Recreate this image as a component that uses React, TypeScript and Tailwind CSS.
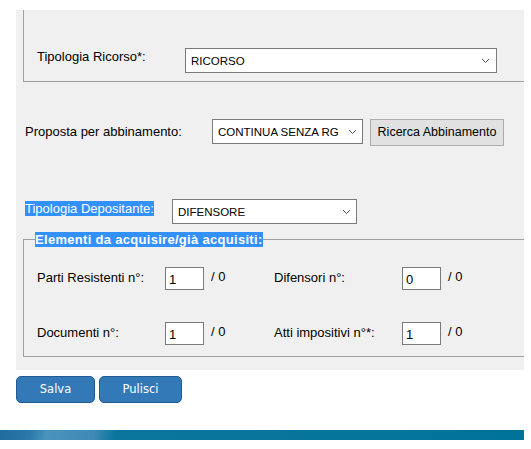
import type { ReactNode } from 'react';

// Small grey chevron used by the fake select boxes
function Chevron() {
  return (
    <svg width="9" height="6" viewBox="0 0 9 6" className="shrink-0">
      <path d="M1 1l3.5 3.5L8 1" fill="none" stroke="#555" strokeWidth="1" />
    </svg>
  );
}

function SelectBox({ value, className }: { value: string; className: string }) {
  return (
    <div
      className={`flex items-center justify-between bg-white border border-[#7a7a7a] pl-[5px] pr-[5px] text-[11.5px] text-black ${className}`}
    >
      <span className="leading-[15px] pt-[1px]">{value}</span>
      <Chevron />
    </div>
  );
}

function NumInput({ value }: { value: string }) {
  return (
    <div className="w-[39px] h-[23px] bg-white border border-[#7a7a7a] pl-[3px] pt-[4px] leading-[15px] text-[13px]">
      {value}
    </div>
  );
}

function Label({ children }: { children: ReactNode }) {
  return <span className="leading-[15px] text-[13px] text-black">{children}</span>;
}

export default function App() {
  return (
    <div className="w-[531px] h-[449px] bg-white overflow-hidden font-['Liberation_Sans',Arial,sans-serif] text-[13px] text-black">
      <div className="pt-[10px] pl-[16px]">
        <div className="w-[508px] h-[360px] bg-[#f0f0f0] overflow-hidden">
          {/* Tipologia ricorso block (fieldset cut at top) */}
          <div className="ml-[7px] h-[72px] border-l border-b border-[#a0a0a0] pt-[37px] pl-[13px]">
            <div className="flex items-start">
              <div className="w-[148px]">
                <Label>Tipologia Ricorso*:</Label>
              </div>
              <SelectBox value="RICORSO" className="w-[312px] h-[25px] mt-[1px] pr-[6px]" />
            </div>
          </div>

          {/* Proposta per abbinamento */}
          <div className="mt-[37px] pl-[9px] flex items-start">
            <div className="w-[187px] pt-[3px]">
              <Label>Proposta per abbinamento:</Label>
            </div>
            <SelectBox value="CONTINUA SENZA RG" className="w-[151px] h-[25px]" />
            <button className="ml-[7px] w-[134px] h-[27px] bg-[#e1e1e1] border border-[#adadad] text-[12.5px] leading-[15px] text-black">
              Ricerca Abbinamento
            </button>
          </div>

          {/* Tipologia depositante */}
          <div className="mt-[53px] pl-[9px] flex items-start">
            <div className="w-[147px]">
              <span className="bg-[#3390ff] text-white leading-[15px] inline-block">Tipologia Depositante:</span>
            </div>
            <SelectBox value="DIFENSORE" className="w-[185px] h-[25px]" />
          </div>

          {/* Elementi da acquisire */}
          <fieldset className="mt-[8px] ml-[7px] border-l border-t border-b border-[#a0a0a0] pb-[11px]">
            <legend className="ml-[11px] bg-[#3390ff] text-white font-bold leading-[15px] tracking-[0.3px]">
              Elementi da acquisire/già acquisiti:
            </legend>
            <div className="pt-[20px] pl-[13px] grid grid-cols-[128px_39px_70px_128px_39px_auto] gap-y-[32px] items-start">
              <div className="pt-[1px]"><Label>Parti Resistenti n°:</Label></div>
              <NumInput value="1" />
              <div className="pl-[7px]"><Label>/ 0</Label></div>
              <div className="pt-[1px]"><Label>Difensori n°:</Label></div>
              <NumInput value="0" />
              <div className="pl-[7px]"><Label>/ 0</Label></div>

              <div className="pt-[1px]"><Label>Documenti n°:</Label></div>
              <NumInput value="1" />
              <div className="pl-[7px]"><Label>/ 0</Label></div>
              <div className="pt-[1px]"><Label>Atti impositivi n°*:</Label></div>
              <NumInput value="1" />
              <div className="pl-[7px]"><Label>/ 0</Label></div>
            </div>
          </fieldset>
        </div>

        {/* Action buttons */}
        <div className="mt-[6px] flex gap-[4px] font-['DejaVu_Sans',Verdana,sans-serif] text-[11.5px]">
          <button className="w-[79px] h-[27px] rounded-[5px] bg-[#3379b7] border border-[#235c92] text-white">
            Salva
          </button>
          <button className="w-[83px] h-[27px] rounded-[5px] bg-[#3379b7] border border-[#235c92] text-white">
            Pulisci
          </button>
        </div>
      </div>

      {/* Footer strip */}
      <div className="mt-[27px] w-[524px] h-[10px] bg-[linear-gradient(100deg,#1f6c9e_0%,#2a7aab_6%,#4a93bd_9%,#3d8ab5_18%,#0b769d_22%,#00739a_100%)]" />
    </div>
  );
}
